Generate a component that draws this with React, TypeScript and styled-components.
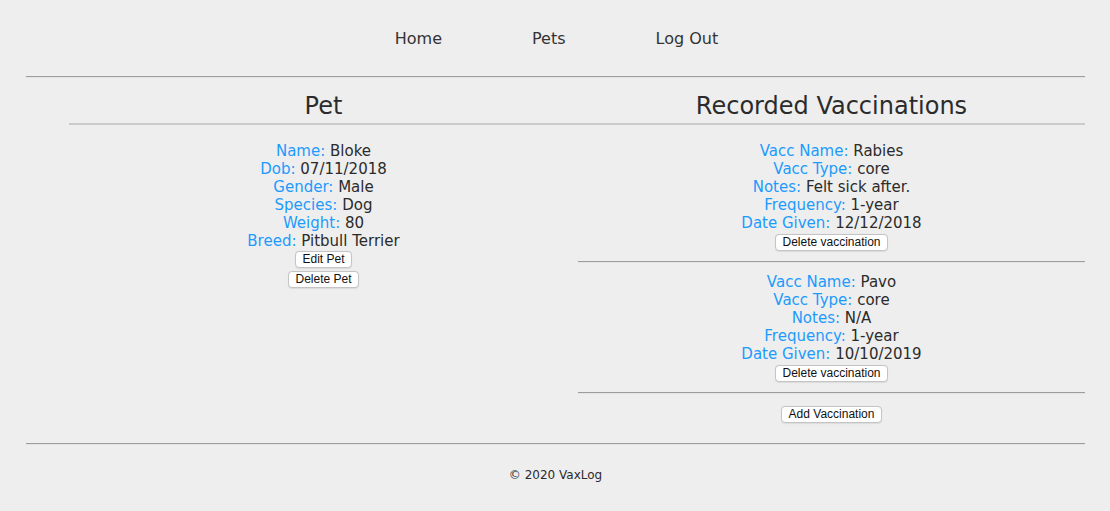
import React from "react";
import styled, { createGlobalStyle } from "styled-components";

const GlobalStyle = createGlobalStyle`
  html, body {
    margin: 0;
    padding: 0;
    background: #eeeeee;
  }
  body {
    font-family: "DejaVu Sans", "Noto Sans", sans-serif;
    color: #2b2b2b;
  }
`;

const Page = styled.div`
  padding: 0 25px 0 26px;
  min-height: 511px;
  box-sizing: border-box;
`;

const Nav = styled.nav`
  display: flex;
  justify-content: center;
  gap: 90px;
  height: 76px;
  align-items: center;
  padding-left: 2px;
`;

const NavLink = styled.a`
  font-size: 16px;
  color: #333;
  text-decoration: none;
  cursor: pointer;
`;

const Rule = styled.hr`
  margin: 0;
  height: 0;
  border: none;
  border-top: 1px solid #9d9d9d;
  border-bottom: 1px solid #e4e4e4;
`;

const Main = styled.main`
  display: grid;
  grid-template-columns: 509px 507px;
  padding-left: 43px;
`;

const Column = styled.section`
  display: flex;
  flex-direction: column;
`;

const Heading = styled.h2`
  margin: 0;
  font-size: 24px;
  font-weight: 400;
  line-height: 30px;
  text-align: center;
  padding: 13px 0 2px;
  border-bottom: 2px solid #cbcbcb;
  color: #2b2b2b;
`;

const Details = styled.div`
  display: flex;
  flex-direction: column;
  align-items: center;
  padding-top: 17px;
`;

const Row = styled.div`
  font-size: 15px;
  line-height: 18px;
  text-align: center;
  white-space: nowrap;
`;

const Label = styled.span`
  color: #1d9bfc;
`;

const Button = styled.button<{ $mt?: number }>`
  display: block;
  margin: ${(p) => p.$mt ?? 2}px auto 0;
  height: 17px;
  padding: 0 6.5px;
  font-family: "Liberation Sans", Arial, sans-serif;
  font-size: 12px;
  line-height: 15px;
  color: #111;
  background: #ffffff;
  border: 1px solid #c4c4c4;
  border-radius: 4px;
  box-shadow: 0 0.5px 1px rgba(0, 0, 0, 0.08);
  cursor: pointer;
`;

const VaccEntry = styled.div<{ $first?: boolean }>`
  align-self: stretch;
  display: flex;
  flex-direction: column;
  align-items: center;
  padding-top: ${(p) => (p.$first ? 0 : 10)}px;
`;

const VaccRule = styled(Rule)`
  align-self: stretch;
  margin-top: 10px;
`;

const FooterRule = styled(Rule)`
  margin-top: 20px;
`;

const Footer = styled.footer`
  display: flex;
  justify-content: center;
  align-items: center;
  height: 60px;
  font-size: 12px;
  color: #2b2b2b;
`;

type Field = [string, string];

const pet: Field[] = [
  ["Name", "Bloke"],
  ["Dob", "07/11/2018"],
  ["Gender", "Male"],
  ["Species", "Dog"],
  ["Weight", "80"],
  ["Breed", "Pitbull Terrier"],
];

const vaccinations: Field[][] = [
  [
    ["Vacc Name", "Rabies"],
    ["Vacc Type", "core"],
    ["Notes", "Felt sick after."],
    ["Frequency", "1-year"],
    ["Date Given", "12/12/2018"],
  ],
  [
    ["Vacc Name", "Pavo"],
    ["Vacc Type", "core"],
    ["Notes", "N/A"],
    ["Frequency", "1-year"],
    ["Date Given", "10/10/2019"],
  ],
];

const Fields = ({ fields }: { fields: Field[] }) => (
  <>
    {fields.map(([k, v]) => (
      <Row key={k}>
        <Label>{k}:</Label> {v}
      </Row>
    ))}
  </>
);

export default function App() {
  return (
    <>
      <GlobalStyle />
      <Page>
        <Nav>
          <NavLink>Home</NavLink>
          <NavLink>Pets</NavLink>
          <NavLink>Log Out</NavLink>
        </Nav>
        <Rule />
        <Main>
          <Column>
            <Heading>Pet</Heading>
            <Details>
              <Fields fields={pet} />
              <Button $mt={1}>Edit Pet</Button>
              <Button $mt={3}>Delete Pet</Button>
            </Details>
          </Column>
          <Column>
            <Heading>Recorded Vaccinations</Heading>
            <Details>
              {vaccinations.map((v, i) => (
                <VaccEntry key={i} $first={i === 0}>
                  <Fields fields={v} />
                  <Button $mt={2}>Delete vaccination</Button>
                  <VaccRule />
                </VaccEntry>
              ))}
              <Button $mt={12}>Add Vaccination</Button>
            </Details>
          </Column>
        </Main>
        <FooterRule />
        <Footer>© 2020 VaxLog</Footer>
      </Page>
    </>
  );
}
